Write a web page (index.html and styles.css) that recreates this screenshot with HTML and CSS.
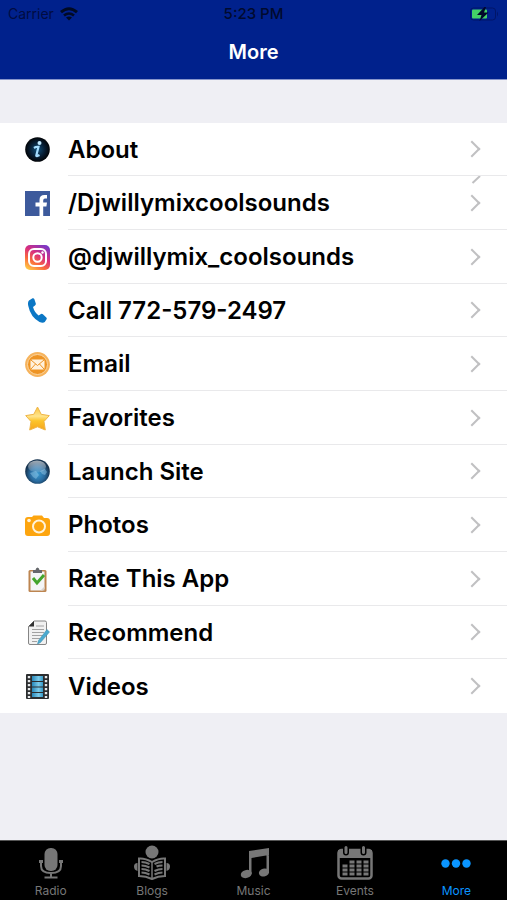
FILE: index.html
```html
<!DOCTYPE html>
<html lang="en">
<head>
  <meta charset="UTF-8">
  <meta name="viewport" content="width=device-width, initial-scale=1">
  <title>More</title>
  <link rel="stylesheet" href="styles.css">
</head>
<body>

  <header>
    <div class="status">
      <span class="carrier">Carrier
        <svg width="18" height="14" viewBox="0 0 18 14" fill="none" stroke="#000a24" stroke-width="3">
          <path d="M1 5.2Q9 -1.6 17 5.2"/>
          <path d="M4 8.6Q9 4.4 14 8.6" stroke-width="2.6"/>
          <path d="M9 13.6L6 10.6Q9 8.2 12 10.6Z" fill="#000a24" stroke="none"/>
        </svg>
      </span>
      <span class="time">5:23 PM</span>
      <span class="battery">
        <svg width="30" height="14" viewBox="0 0 30 14">
          <rect x="1.500" y="1" width="25" height="12" rx="3" fill="none" stroke="#001568"/>
          <path d="M28 4.500Q30 7 28 9.500Z" fill="#001568"/>
          <rect x="3" y="2.500" width="15" height="9" rx="1" fill="#43d267"/>
          <path d="M15.500 0L8 8h4.500L10.500 14 19.500 5.500h-4.500L17 0Z" fill="#00082a"/>
        </svg>
      </span>
    </div>
    <h1>More</h1>
  </header>

  <main>
    <ul class="menu">
      <li>
        <a href="#about">
          <svg class="icon" viewBox="0 0 25 25">
            <defs><radialGradient id="info"><stop offset="0" stop-color="#12517c"/><stop offset=".6" stop-color="#071d33"/><stop offset="1" stop-color="#020407"/></radialGradient></defs>
            <circle cx="12.500" cy="12.500" r="12.300" fill="url(#info)"/>
            <circle cx="14.500" cy="6" r="2" fill="#bfe8ff"/>
            <path d="M9 11Q11 9.500 13.500 9.800L11.300 18.500Q11 20 14.500 18" fill="none" stroke="#a4dcff" stroke-width="2.200"/>
          </svg>
          <span>About</span>
        </a>
      </li>
      <li>
        <a href="#facebook">
          <svg class="icon" viewBox="0 0 25 25">
            <rect width="25" height="25" fill="#3d5a9c"/>
            <path d="M14.500 25v-9.500H10.500v-4h4V9Q14.500 4 19.500 4H22v3.500h-2q-1.800 0-1.800 2v2H22l-.6 4h-3.200V25Z" fill="#fff"/>
          </svg>
          <span>/Djwillymixcoolsounds</span>
        </a>
        <svg class="half" width="10" height="8" viewBox="0 0 10 8"><path d="M9 0L1.500 7" fill="none" stroke="#c0c0c2" stroke-width="2"/></svg>
      </li>
      <li>
        <a href="#instagram">
          <svg class="icon" viewBox="0 0 25 25">
            <defs>
              <linearGradient id="insta" x1=".2" y1="1" x2=".8" y2="0"><stop offset="0" stop-color="#ffc545"/><stop offset=".3" stop-color="#fa6a3c"/><stop offset=".6" stop-color="#d92e7f"/><stop offset="1" stop-color="#7838c8"/></linearGradient>
            </defs>
            <rect width="25" height="25" rx="5" fill="url(#insta)"/>
            <g fill="none" stroke="#fff" stroke-width="2">
              <rect x="4" y="4" width="17" height="17" rx="5"/>
              <circle cx="12.500" cy="12.500" r="4.200"/>
            </g>
            <circle cx="17.500" cy="7.500" r="1.200" fill="#fff"/>
          </svg>
          <span>@djwillymix_coolsounds</span>
        </a>
      </li>
      <li>
        <a href="tel:772-579-2497">
          <svg class="icon" viewBox="0 0 25 25">
            <path d="M4 2.500L7.500.3Q8.800-.1 9.400 1.200L10.800 5.500Q11 6.700 10 7.400L8 9Q9.500 14.500 13.600 17.400L16 16Q17 15.500 17.900 16.200L21.300 19.400Q22.200 20.400 21.400 21.500L19.800 24Q18 25.500 14.500 24Q5.500 19 3.300 8Q2.400 4 4 2.500Z" fill="#0b77c5"/>
          </svg>
          <span>Call 772-579-2497</span>
        </a>
      </li>
      <li>
        <a href="#email">
          <svg class="icon" viewBox="0 0 25 25">
            <circle cx="12.500" cy="12.500" r="12.400" fill="#f6b35c"/>
            <circle cx="12.500" cy="12.500" r="10" fill="#ee9424" stroke="#fbd5a0"/>
            <rect x="5.500" y="7.500" width="14" height="10" rx="1.500" fill="#fff1dc"/>
            <path d="M6 8l6.500 5.500L19 8M6 17l4.500-5M19 17l-4.500-5" fill="none" stroke="#ee9424"/>
          </svg>
          <span>Email</span>
        </a>
      </li>
      <li>
        <a href="#favorites">
          <svg class="icon" viewBox="0 0 25 25">
            <defs><linearGradient id="star" x2="0" y2="1"><stop offset="0" stop-color="#f9c63f"/><stop offset=".4" stop-color="#ffe48c"/><stop offset=".6" stop-color="#fcc52c"/><stop offset="1" stop-color="#f6a51c"/></linearGradient></defs>
            <path d="M12.500 1L16.200 8.300 24.300 9.600 19 15.500 20.300 24 12.500 20.800 4.700 24 6 15.500.7 9.600 8.800 8.300Z" fill="url(#star)" stroke="#efb548" stroke-linejoin="round"/>
          </svg>
          <span>Favorites</span>
        </a>
      </li>
      <li>
        <a href="#site">
          <svg class="icon" viewBox="0 0 25 25">
            <defs>
              <radialGradient id="globe" cx=".5" cy=".6"><stop offset="0" stop-color="#3b9bd2"/><stop offset=".6" stop-color="#296b9f"/><stop offset="1" stop-color="#16334f"/></radialGradient>
              <linearGradient id="shine" x2="0" y2="1"><stop offset="0" stop-color="#fff" stop-opacity=".6"/><stop offset="1" stop-color="#fff" stop-opacity=".1"/></linearGradient>
            </defs>
            <circle cx="12.500" cy="12.500" r="12.300" fill="url(#globe)"/>
            <path d="M5 14L11 12 14 16 11 20 8 18ZM15 12L20 10 22 13 20 16 17 15Z" fill="#8fc6e5" opacity=".5"/>
            <ellipse cx="12" cy="7.500" rx="9" ry="6" fill="url(#shine)"/>
          </svg>
          <span>Launch Site</span>
        </a>
      </li>
      <li>
        <a href="#photos">
          <svg class="icon" viewBox="0 0 25 25">
            <path d="M3 4H7L8.500 2.500H17L19 5H22Q25 5 25 8V20Q25 23 22 23H3Q0 23 0 20V7Q0 4 3 4Z" fill="#fda50f"/>
            <circle cx="14" cy="13.500" r="6" fill="none" stroke="#fff3da" stroke-width="2"/>
            <circle cx="4" cy="7.500" r="1.800" fill="#fff3da"/>
          </svg>
          <span>Photos</span>
        </a>
      </li>
      <li>
        <a href="#rate">
          <svg class="icon" viewBox="0 0 25 25">
            <rect x="3.500" y="3" width="18" height="22" rx="1.500" fill="#bd8550"/>
            <path d="M5.500 4.500h14v17l-2 2h-12Z" fill="#f4f5f6"/>
            <path d="M19.500 19.500v4h-4Z" fill="#d8d3ce"/>
            <path d="M8 3h2.500Q11 .5 12.500.5T14.500 3H17v3H8Z" fill="#65676b"/>
            <path d="M8 11L12 16 19 8" fill="none" stroke="#43a52c" stroke-width="3"/>
          </svg>
          <span>Rate This App</span>
        </a>
      </li>
      <li>
        <a href="#recommend">
          <svg class="icon" viewBox="0 0 25 25">
            <path d="M9 1H20Q21.500 1 21.500 2.500V23Q21.500 24.500 20 24.500H5Q3.500 24.500 3.500 23V6.500Z" fill="#f1f1f1" stroke="#858585"/>
            <path d="M9 1V6.500H3.500Z" fill="#333"/>
            <path d="M11 6h8M7 9.500h12M7 12.500h12M7 15.500h11M7 18.500h8M7 21.500h5" stroke="#a2a2a2"/>
            <path d="M22 9.500L24.500 12 15.500 22.500 12.500 24 13.500 20.500Z" fill="#4baacf" stroke="#398aac" stroke-width=".5"/>
          </svg>
          <span>Recommend</span>
        </a>
      </li>
      <li>
        <a href="#videos">
          <svg class="icon" viewBox="0 0 25 25">
            <defs><linearGradient id="film"><stop offset="0" stop-color="#2787b9"/><stop offset=".6" stop-color="#7bcbea"/><stop offset="1" stop-color="#3799c7"/></linearGradient></defs>
            <rect x="1" width="23" height="25" rx="1" fill="#2c2e30"/>
            <path d="M7 2h11v5H7ZM7 8h11v4.500H7ZM7 13.500h11V18H7ZM7 19h11v4H7Z" fill="url(#film)"/>
            <path d="M4 2v22M21 2v22" stroke="#e7eaec" stroke-width="2.400" stroke-dasharray="2.300 1.700"/>
          </svg>
          <span>Videos</span>
        </a>
      </li>
    </ul>
  </main>

  <nav class="tabs">
    <a href="#radio">
      <svg width="36" height="36" viewBox="0 0 36 36" fill="none" stroke="#777" stroke-width="2">
        <rect x="11.500" y="3" width="13" height="23" rx="6" fill="#777" stroke="none"/>
        <path d="M8 16v5q0 7 10 7t10-7v-5M18 28v5M11.500 32.500h13"/>
        <path d="M6 15h4v3H6ZM26 15h4v3h-4Z" fill="#777" stroke="none"/>
      </svg>
      Radio
    </a>
    <a href="#blogs">
      <svg width="36" height="36" viewBox="0 0 36 36" fill="none" stroke="#777" stroke-width="2">
        <circle cx="18" cy="7" r="6.500" fill="#777" stroke="none"/>
        <path d="M18 17Q11 13 5 13.500V31Q12 31 18 34Q24 31 31 31V13.500Q25 13 18 17Z"/>
        <path d="M18 17v17" stroke-width="1.500"/>
        <path d="M7.500 17q4 0 8 2M7.500 20.500q4 0 8 2M7.500 24q4 0 8 2M7.500 27.500q4 0 8 2M28.500 17q-4 0-8 2M28.500 24q-4 0-8 2M28.500 27.500q-4 0-8 2M28.500 20.500q-4 0-6 1"/>
        <path d="M3.500 18Q0 18 0 21.500T3.500 26ZM32.500 18Q36 18 36 21.500T32.500 26Z" fill="#777" stroke="none"/>
      </svg>
      Blogs
    </a>
    <a href="#music">
      <svg width="36" height="36" viewBox="0 0 36 36" fill="#777">
        <path d="M13 6L33 3V10L15.500 13V29H13ZM30.500 9H33v19h-2.500Z"/>
        <ellipse cx="10.300" cy="29" rx="5.600" ry="4" transform="rotate(-15 10.300 29)"/>
        <ellipse cx="28" cy="27.500" rx="5.200" ry="4" transform="rotate(-15 28 27.500)"/>
      </svg>
      Music
    </a>
    <a href="#events">
      <svg width="36" height="36" viewBox="0 0 36 36">
        <rect x="1.500" y="5" width="33" height="28.500" rx="3" fill="none" stroke="#777" stroke-width="2.500"/>
        <path d="M1 5h34v8H1Z" fill="#777"/>
        <path d="M9 2.500v5M26.500 2.500v5" stroke="#000" stroke-width="6" stroke-linecap="round"/>
        <path d="M9 2.500v5M26.500 2.500v5" stroke="#777" stroke-width="3" stroke-linecap="round"/>
        <path d="M12.500 17h19M5.500 21h26M5.500 25h26M5.500 29h26" stroke="#777" stroke-width="2.800" stroke-dasharray="5 2"/>
      </svg>
      Events
    </a>
    <a href="#more" class="active">
      <svg width="36" height="36" viewBox="0 0 36 36" fill="#0a95ff">
        <circle cx="7.500" cy="18.500" r="4.200"/>
        <circle cx="18" cy="18.500" r="4.200"/>
        <circle cx="28.500" cy="18.500" r="4.200"/>
      </svg>
      More
    </a>
  </nav>

</body>
</html>
```
FILE: styles.css
```css
* { box-sizing: border-box; }
body {
  margin: 0;
  min-height: 100vh;
  display: flex;
  flex-direction: column;
  background: #efeff4;
  color: #000;
  font-family: Inter, "Liberation Sans", sans-serif;
}
a {
  color: inherit;
  text-decoration: none;
}
svg {
  display: block;
  flex: none;
}
header {
  background: #00218c;
  border-bottom: 1px solid #8795cb;
}
.status {
  display: grid;
  grid-template-columns: 1fr auto 1fr;
  align-items: center;
  height: 27px;
  padding: 0 8px;
  color: #000a2e;
}
.carrier {
  display: flex;
  align-items: center;
  gap: 6px;
  font-size: 14px;
  color: #000c42;
}
.time {
  font-size: 15px;
  font-weight: 500;
}
.battery {
  justify-self: end;
}
h1 {
  margin: 0;
  height: 52px;
  line-height: 50px;
  text-align: center;
  color: #fff;
  font-size: 20px;
  font-weight: 600;
}
main {
  flex: 1;
  padding: 43px 0;
}
.menu {
  list-style: none;
  margin: 0;
  padding: 0;
  background: #fff;
}
.menu li {
  position: relative;
}
.menu a {
  display: flex;
  align-items: center;
  gap: 18px;
  height: 54px;
  padding-left: 25px;
}
.menu li:nth-child(3n+1) a {
  height: 53px;
}
.icon {
  width: 25px;
  height: 25px;
}
.menu span {
  flex: 1;
  display: flex;
  align-items: center;
  justify-content: space-between;
  height: 100%;
  padding-right: 29px;
  border-bottom: 1px solid #e9e9eb;
  font-size: 24px;
  font-weight: 600;
}
.menu span::after {
  content: "";
  width: 10px;
  height: 10px;
  border: solid #c0c0c2;
  border-width: 2px 2px 0 0;
  transform: rotate(45deg);
}
.menu li:last-child span {
  border-bottom: 0;
}
.half {
  position: absolute;
  top: 0;
  right: 26px;
}
.tabs {
  position: sticky;
  bottom: 0;
  display: flex;
  height: 60px;
  background: #000;
  border-top: 1px solid #555;
}
.tabs a {
  flex: 1;
  display: flex;
  flex-direction: column;
  align-items: center;
  gap: 2px;
  padding-top: 4px;
  color: #777;
  font-size: 12px;
  line-height: 16px;
}
.tabs .active {
  color: #0a95ff;
}
```
